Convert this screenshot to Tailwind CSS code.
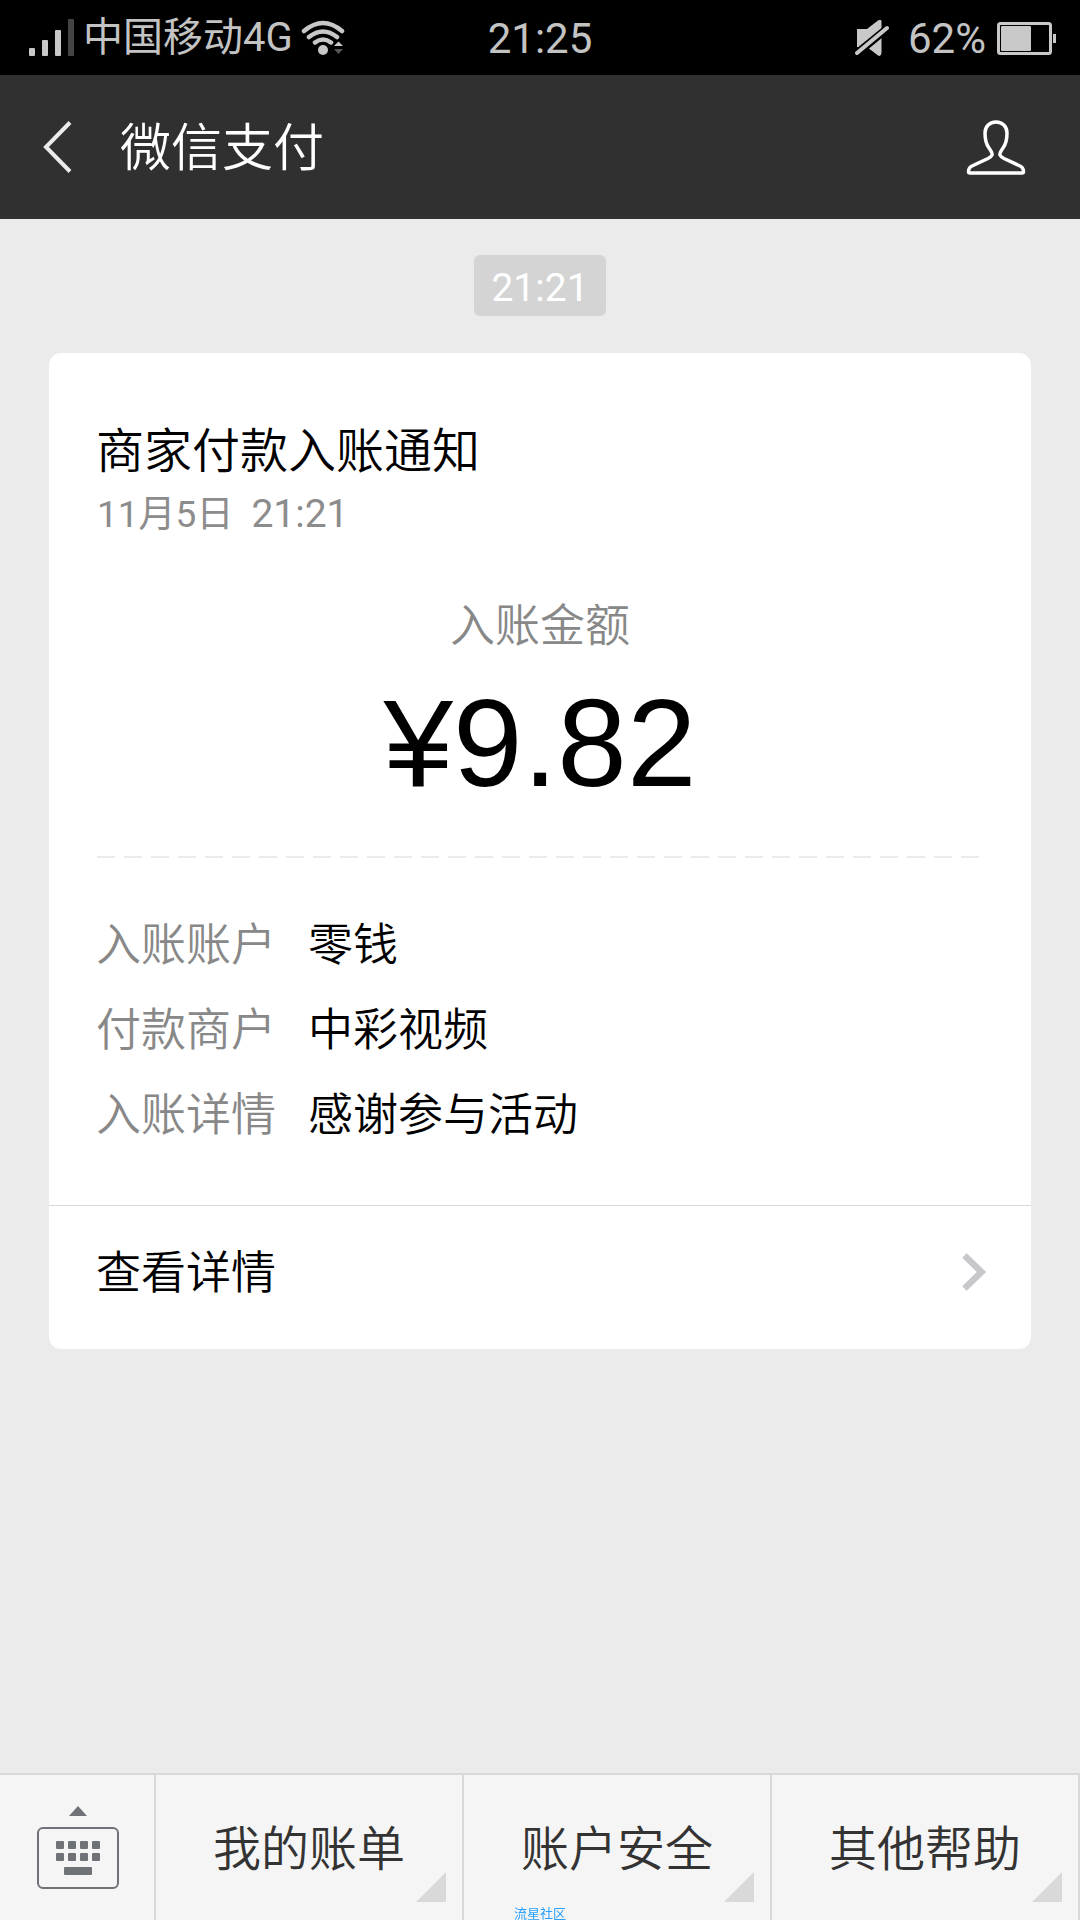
<!DOCTYPE html>
<html lang="zh-CN">
<head>
<meta charset="utf-8">
<meta name="viewport" content="width=device-width, initial-scale=1">
<title>微信支付</title>
<script src="https://cdn.jsdelivr.net/npm/@tailwindcss/browser@4"></script>
</head>
<body class="flex min-h-screen flex-col overflow-x-hidden bg-[#ebebeb] font-['Roboto','Noto_Sans_CJK_SC',sans-serif] font-[350] text-black">

<div class="grid h-[75px] grid-cols-[1fr_auto_1fr] items-center bg-black text-[#c3c3c3]">
  <div class="flex items-center pl-7">
    <svg class="h-[38px] w-[48px]" viewBox="0 0 48 38" fill="#c8c8c8" aria-label="信号">
      <rect x="1" y="29" width="6" height="8" rx="1"/><rect x="14" y="21" width="6" height="16" rx="1"/><rect x="27" y="11" width="6" height="26" rx="1"/><rect x="40" y="0" width="6" height="37" rx="1" fill="#444"/>
    </svg>
    <span class="pl-[7px] text-[40px] leading-[48px] font-normal">中国移动4G</span>
    <svg class="ml-2 h-[36px] w-[44px]" viewBox="0 0 44 36" fill="none" stroke="#c8c8c8" stroke-linecap="round" aria-label="无线网络">
      <path d="M3 11Q22 -5 41 11M8 17Q22 6 36 17M14 22.500Q22 16.500 30 22.500" stroke-width="4.500"/>
      <circle cx="22" cy="30" r="5" fill="#c8c8c8" stroke="none"/>
      <path d="M31 28L37.500 20.500L44 28Z" fill="#000" stroke="none"/><path d="M33 26L37.500 21.500L42 26Z" fill="#c8c8c8" stroke="none"/><path d="M33 29L37.500 34L42 29Z" fill="#555" stroke="none"/>
    </svg>
  </div>
  <span class="pt-[3px] text-[42px] leading-[48px] font-normal">21:25</span>
  <div class="flex items-center justify-end pr-6">
    <svg class="h-[36px] w-[35px]" viewBox="0 0 35 36" aria-label="静音">
      <path d="M2 9H12L23 0.500Q26 -1 26.500 1V33Q26 37 23 35.500L12 27H2Z" fill="#c8c8c8"/>
      <path d="M1 34L34 7" stroke="#000" stroke-width="8"/><path d="M2 33L32 8" stroke="#c8c8c8" stroke-width="4" stroke-linecap="round"/>
    </svg>
    <span class="pt-[3px] pl-[18px] text-[42px] leading-[48px] font-normal">62%</span>
    <svg class="ml-2.5 h-[34px] w-[60px]" viewBox="0 0 60 34" aria-label="电量">
      <rect x="2.500" y="2.500" width="52" height="30" rx="2" fill="none" stroke="#c8c8c8" stroke-width="3"/><rect x="5" y="5" width="30" height="25" rx="1" fill="#c8c8c8"/><rect x="57" y="13" width="3" height="9" fill="#c8c8c8"/>
    </svg>
  </div>
</div>

<header class="flex h-36 items-center bg-[#303030] pr-[54px] pl-[43px] text-white">
  <button class="h-[52px] w-[29px]" aria-label="返回">
    <svg class="h-[52px] w-[29px]" viewBox="0 0 29 52" fill="none" stroke="#ebebeb" stroke-width="4"><path d="M27 1.500L3 26L27 50.500"/></svg>
  </button>
  <h1 class="flex-1 pt-1 pl-12 text-[51px] leading-[64px]">微信支付</h1>
  <button class="h-[56px] w-[60px]" aria-label="账号资料">
    <svg class="h-[56px] w-[60px]" viewBox="0 0 60 56" fill="none" stroke="#fff" stroke-width="3.500" stroke-linejoin="round"><path d="M30 3C23 3 19 8 19 14C19 22 20 25 23 29C26 33 26.500 34 26 36C25 38 24 38.500 22 39.500L7 46.500C3.500 48 2.500 50 2.500 52.500Q2.500 54 4 54H56Q57.500 54 57.500 52.500C57.500 50 56.500 48 53 46.500L38 39.500C36 38.500 35 38 34 36C33.500 34 34 33 37 29C40 25 41 22 41 14C41 8 37 3 30 3Z"/></svg>
  </button>
</header>

<main class="flex-1">
  <div class="flex justify-center pt-9">
    <time class="rounded-md bg-[#d4d4d4] px-[17px] pt-[5px] text-[39px] leading-[56px] font-normal text-white">21:21</time>
  </div>

  <article class="mx-[49px] mt-[37px] rounded-xl bg-white">
    <div class="pt-[67px] pr-[52px] pl-[47px]">
      <h2 class="text-[48px] leading-[64px]">商家付款入账通知</h2>
      <p class="mt-0.5 flex items-baseline gap-[18px] pl-px text-[37px] leading-[56px] font-normal text-[#8c8c8c]">
        <span>11月5日</span>
        <span class="text-[39px]">21:21</span>
      </p>
    </div>
    <div class="text-center">
      <p class="mt-[54px] text-[45px] leading-[60px] text-[#888]">入账金额</p>
      <p class="mt-[23px] font-['Liberation_Sans',sans-serif] text-[125px] leading-[125px] font-normal">¥9.82</p>
    </div>
    <div class="mt-[51px] mr-[52px] ml-12 h-0.5 bg-[repeating-linear-gradient(to_right,#ebebeb_0_18px,transparent_18px_27px)]"></div>
    <dl class="mt-[45px] mb-[47px] grid grid-cols-[180px_1fr] gap-x-8 pl-[47px] text-[45px] leading-[85px]">
      <dt class="text-[#888]">入账账户</dt><dd>零钱</dd>
      <dt class="text-[#888]">付款商户</dt><dd>中彩视频</dd>
      <dt class="text-[#888]">入账详情</dt><dd>感谢参与活动</dd>
    </dl>
    <a href="#" class="flex h-36 items-center justify-between border-t border-[#d9d9d9] pr-11 pb-3 pl-[47px] text-[45px] leading-[60px]">
      <span class="pt-1">查看详情</span>
      <svg class="h-[38px] w-[25px]" viewBox="0 0 25 38" fill="none" stroke="#c7c7cc" stroke-width="6.500"><path d="M2.500 2.500L19.500 19L2.500 35.500"/></svg>
    </a>
  </article>
</main>

<footer class="grid grid-cols-[156px_1fr_1fr_1fr] border-t-2 border-[#d9d9d9] bg-[#f5f5f5] text-[48px] leading-[64px] text-[#333]">
  <button class="flex h-[145px] items-center justify-center border-r-2 border-[#d9d9d9] pb-0.5 pl-0.5" aria-label="键盘">
    <svg class="h-[84px] w-[84px]" viewBox="0 0 84 84" fill="#6f7378">
      <path d="M33 11L42 1L51 11Z"/><rect x="2" y="23" width="80" height="60" rx="5" fill="none" stroke="#6f7378" stroke-width="2"/>
      <g><rect x="20" y="36" width="8" height="8" rx="1"/><rect x="32" y="36" width="8" height="8" rx="1"/><rect x="44" y="36" width="8" height="8" rx="1"/><rect x="56" y="36" width="8" height="8" rx="1"/><rect x="20" y="48" width="8" height="8" rx="1"/><rect x="32" y="48" width="8" height="8" rx="1"/><rect x="44" y="48" width="8" height="8" rx="1"/><rect x="56" y="48" width="8" height="8" rx="1"/></g><rect x="28" y="62" width="28" height="8" rx="1"/>
    </svg>
  </button>
  <button class="relative border-r-2 border-[#d9d9d9] pt-1">我的账单
    <svg class="absolute right-4 bottom-[18px] h-[30px] w-[30px]" viewBox="0 0 30 30" fill="#d9d9d9"><path d="M30 0V30H0Z"/></svg>
  </button>
  <button class="relative border-r-2 border-[#d9d9d9] pt-1">账户安全
    <svg class="absolute right-4 bottom-[18px] h-[30px] w-[30px]" viewBox="0 0 30 30" fill="#d9d9d9"><path d="M30 0V30H0Z"/></svg>
  </button>
  <button class="relative border-r-2 border-[#d9d9d9] pt-1">其他帮助
    <svg class="absolute right-4 bottom-[18px] h-[30px] w-[30px]" viewBox="0 0 30 30" fill="#d9d9d9"><path d="M30 0V30H0Z"/></svg>
  </button>
</footer>
<div class="fixed inset-x-0 bottom-0 text-center text-[13px] leading-[12px] font-normal text-[#2aa0ff]">流星社区</div>
</body>
</html>
